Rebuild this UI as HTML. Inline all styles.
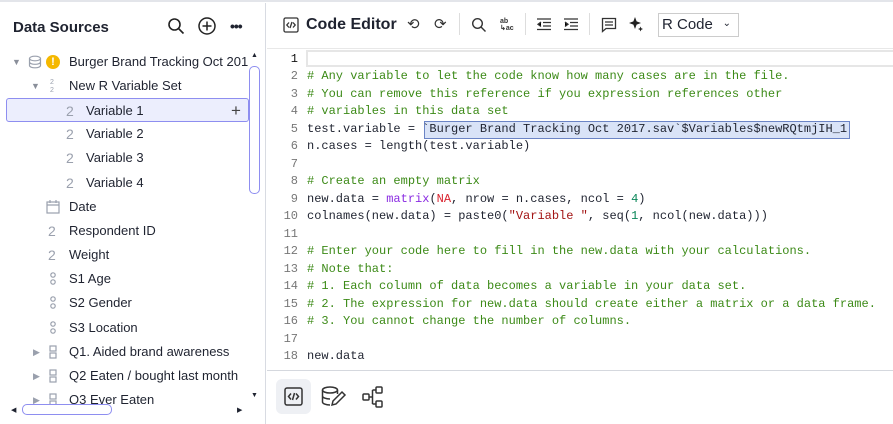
<!DOCTYPE html>
<html><head><style>
*{box-sizing:border-box;margin:0;padding:0}
body{width:893px;height:424px;overflow:hidden;background:#fff;font-family:"Liberation Sans",sans-serif;color:#1f2330;position:relative}
.top{position:absolute;left:0;top:0;width:893px;height:3px;border-top:2px solid #e3e5ea}
.left{position:absolute;left:0;top:3px;width:266px;height:421px;border-right:1px solid #d8dbe2}
.title{position:absolute;left:13px;font-weight:bold;font-size:15px}
.row{position:absolute;left:0;height:24px;width:250px;font-size:13px;line-height:24px;white-space:nowrap}
.row .t{position:absolute}
.num{position:absolute;color:#9aa0ad;font-size:14px}
.sel{background:#eceefd;border:1px solid #8e8ef0;border-radius:3px;left:6px;width:243px}
.code{position:absolute;left:270px;top:52px;font-family:"Liberation Mono",monospace;font-size:12px}
.ln{position:absolute;left:0;width:28px;text-align:right;color:#777}
.cl{position:absolute;left:37px;white-space:pre;color:#1f2330}
.c{color:#3c8a17}.k{color:#8a2be2}.r{color:#d9232e}.s{color:#a31515}.n{color:#098658}
</style></head><body>
<div class="top"></div>
<div class="left">
<div class="title" style="top:16px">Data Sources</div>
<svg style="position:absolute;left:167px;top:14px" width="18" height="18" fill="none" stroke="#222" stroke-width="1.6"><circle cx="7.5" cy="7.5" r="5.5"/><path d="M11.5 11.5l5 5"/></svg>
<svg style="position:absolute;left:197px;top:13px" width="20" height="20" fill="none" stroke="#222" stroke-width="1.5"><circle cx="10" cy="10" r="8"/><path d="M10 5.5v9M5.5 10h9"/></svg>
<div style="position:absolute;left:230px;top:15px;font-size:14px;font-weight:bold;letter-spacing:-1px">•••</div>
</div>
<div style="position:absolute;left:0;top:1px">
<div class="row" style="top:49px"><span class="t" style="left:12px;color:#8a8f9a;font-size:9px">▼</span>
<svg style="position:absolute;left:28px;top:5px" width="14" height="14" fill="none" stroke="#9aa0ad" stroke-width="1.2"><ellipse cx="7" cy="3.5" rx="5.5" ry="2.3"/><path d="M1.5 3.5v7c0 1.3 2.5 2.3 5.5 2.3s5.5-1 5.5-2.3v-7M1.5 7c0 1.3 2.5 2.3 5.5 2.3s5.5-1 5.5-2.3"/></svg>
<span style="position:absolute;left:46px;top:5px;width:14px;height:14px;border-radius:7px;background:#f5b800;color:#fff;font-size:11px;line-height:14px;text-align:center;font-weight:bold">!</span>
<span class="t" style="left:69px">Burger Brand Tracking Oct 201</span></div>
<div class="row" style="top:73px"><span class="t" style="left:31px;color:#8a8f9a;font-size:9px">▼</span><span class="t" style="left:50px;color:#9aa0ad;font-size:7px;line-height:8px;top:5px">2<br>2</span><span class="t" style="left:69px">New R Variable Set</span></div>
<div class="row sel" style="top:97px"><span class="num" style="left:59px">2</span><span class="t" style="left:79px">Variable 1</span><span class="t" style="left:224px;font-size:17px;color:#444">+</span></div>
<div class="row" style="top:121px"><span class="num" style="left:66px">2</span><span class="t" style="left:86px">Variable 2</span></div>
<div class="row" style="top:145px"><span class="num" style="left:66px">2</span><span class="t" style="left:86px">Variable 3</span></div>
<div class="row" style="top:170px"><span class="num" style="left:66px">2</span><span class="t" style="left:86px">Variable 4</span></div>
<div class="row" style="top:194px"><svg style="position:absolute;left:46px;top:5px" width="14" height="14" fill="none" stroke="#9aa0ad" stroke-width="1.2"><rect x="1" y="2" width="12" height="11"/><path d="M1 5h12M4 0v3M10 0v3"/></svg><span class="t" style="left:69px">Date</span></div>
<div class="row" style="top:218px"><span class="num" style="left:48px">2</span><span class="t" style="left:69px">Respondent ID</span></div>
<div class="row" style="top:242px"><span class="num" style="left:48px">2</span><span class="t" style="left:69px">Weight</span></div>
<div class="row" style="top:266px"><svg style="position:absolute;left:49px;top:5px" width="8" height="14" fill="none" stroke="#9aa0ad" stroke-width="1.2"><circle cx="4" cy="3" r="2.2"/><circle cx="4" cy="10" r="2.2"/></svg><span class="t" style="left:69px">S1 Age</span></div>
<div class="row" style="top:290px"><svg style="position:absolute;left:49px;top:5px" width="8" height="14" fill="none" stroke="#9aa0ad" stroke-width="1.2"><circle cx="4" cy="3" r="2.2"/><circle cx="4" cy="10" r="2.2"/></svg><span class="t" style="left:69px">S2 Gender</span></div>
<div class="row" style="top:315px"><svg style="position:absolute;left:49px;top:5px" width="8" height="14" fill="none" stroke="#9aa0ad" stroke-width="1.2"><circle cx="4" cy="3" r="2.2"/><circle cx="4" cy="10" r="2.2"/></svg><span class="t" style="left:69px">S3 Location</span></div>
<div class="row" style="top:339px"><span class="t" style="left:33px;color:#9aa0ad;font-size:9px">▶</span><svg style="position:absolute;left:49px;top:5px" width="8" height="14" fill="none" stroke="#9aa0ad" stroke-width="1.2"><rect x="1" y="1" width="6" height="5"/><rect x="1" y="8" width="6" height="5"/></svg><span class="t" style="left:69px">Q1. Aided brand awareness</span></div>
<div class="row" style="top:363px"><span class="t" style="left:33px;color:#9aa0ad;font-size:9px">▶</span><svg style="position:absolute;left:49px;top:5px" width="8" height="14" fill="none" stroke="#9aa0ad" stroke-width="1.2"><rect x="1" y="1" width="6" height="5"/><rect x="1" y="8" width="6" height="5"/></svg><span class="t" style="left:69px">Q2 Eaten / bought last month</span></div>
<div class="row" style="top:387px"><span class="t" style="left:33px;color:#9aa0ad;font-size:9px">▶</span><svg style="position:absolute;left:49px;top:5px" width="8" height="14" fill="none" stroke="#9aa0ad" stroke-width="1.2"><rect x="1" y="1" width="6" height="5"/><rect x="1" y="8" width="6" height="5"/></svg><span class="t" style="left:69px">Q3 Ever Eaten</span></div>
</div>
<div style="position:absolute;left:249px;top:66px;width:11px;height:128px;border:1px solid #8e8ef0;border-radius:5px;background:#fff"></div>
<div style="position:absolute;left:251px;top:52px;font-size:7px">▲</div>
<div style="position:absolute;left:251px;top:392px;font-size:7px">▼</div>
<div style="position:absolute;left:22px;top:404px;width:90px;height:11px;border:1px solid #8e8ef0;border-radius:5px;background:#fff"></div>
<div style="position:absolute;left:11px;top:406px;font-size:7px">◀</div>
<div style="position:absolute;left:237px;top:406px;font-size:7px">▶</div>

<svg style="position:absolute;left:283px;top:17px" width="16" height="16" fill="none" stroke="#333" stroke-width="1.3"><rect x="1" y="1" width="14" height="14" rx="1.5"/><path d="M6 5.5L3.8 8 6 10.5M10 5.5l2.2 2.5L10 10.5M9 5l-2 6"/></svg>
<div style="position:absolute;left:306px;top:16px;font-weight:bold;font-size:16px">Code Editor</div>
<div style="position:absolute;left:407px;top:15px;font-size:15px;color:#333">⟲</div>
<div style="position:absolute;left:434px;top:15px;font-size:15px;color:#333">⟳</div>
<div style="position:absolute;left:459px;top:13px;width:1px;height:22px;background:#ddd"></div>
<svg style="position:absolute;left:471px;top:17px" width="16" height="16" fill="none" stroke="#333" stroke-width="1.4"><circle cx="6.5" cy="6.5" r="4.8"/><path d="M10 10l4.5 4.5"/></svg>
<div style="position:absolute;left:500px;top:18px;font-size:7px;line-height:7px;font-weight:bold;color:#333">ab<br>↳ac</div>
<div style="position:absolute;left:525px;top:13px;width:1px;height:22px;background:#ddd"></div>
<svg style="position:absolute;left:537px;top:18px" width="14" height="13" stroke="#333" stroke-width="1.3"><path d="M0 1h14M6 4.5h8M6 8h8M0 11.5h14M4 4L1 6.3 4 8.5"/></svg>
<svg style="position:absolute;left:564px;top:18px" width="14" height="13" stroke="#333" stroke-width="1.3"><path d="M0 1h14M6 4.5h8M6 8h8M0 11.5h14M1 4l3 2.3L1 8.5"/></svg>
<div style="position:absolute;left:589px;top:13px;width:1px;height:22px;background:#ddd"></div>
<svg style="position:absolute;left:601px;top:17px" width="16" height="16" fill="none" stroke="#333" stroke-width="1.3"><path d="M1.5 1.5h13v10H5l-3.5 3z M4 5h8M4 8h8"/></svg>
<svg style="position:absolute;left:628px;top:16px" width="16" height="16" fill="#222"><path d="M7 1l1.6 4.4L13 7l-4.4 1.6L7 13 5.4 8.6 1 7l4.4-1.6z"/><path d="M12.5 10.5l.8 1.8 1.7.7-1.7.7-.8 1.8-.7-1.8-1.8-.7 1.8-.7z"/></svg>
<div style="position:absolute;left:658px;top:13px;width:81px;height:24px;border:1px solid #ccc;font-size:15px;line-height:21px;padding-left:3px">R Code<span style="position:absolute;right:7px;top:-1px;font-size:10px">⌄</span></div>

<div style="position:absolute;left:267px;top:48px;width:626px;height:1px;background:#e8e8e8"></div>
<div style="position:absolute;left:306px;top:50px;width:587px;height:17px;border:1px solid #e6e6e6;border-width:2px 0 2px 2px"></div>
<div style="position:absolute;left:424px;top:121px;width:426px;height:18px;background:#d9e3f7;border:1px solid #6b84c5"></div>

<div class="code">
<div class="ln" style="top:0px;color:#111">1</div>
<div class="ln" style="top:17px">2</div><div class="cl c" style="top:17px"># Any variable to let the code know how many cases are in the file.</div>
<div class="ln" style="top:35px">3</div><div class="cl c" style="top:35px"># You can remove this reference if you expression references other</div>
<div class="ln" style="top:52px">4</div><div class="cl c" style="top:52px"># variables in this data set</div>
<div class="ln" style="top:70px">5</div><div class="cl" style="top:70px">test.variable = `Burger Brand Tracking Oct 2017.sav`$Variables$newRQtmjIH_1</div>
<div class="ln" style="top:87px">6</div><div class="cl" style="top:87px">n.cases = length(test.variable)</div>
<div class="ln" style="top:105px">7</div>
<div class="ln" style="top:122px">8</div><div class="cl c" style="top:122px"># Create an empty matrix</div>
<div class="ln" style="top:140px">9</div><div class="cl" style="top:140px">new.data = <span class="k">matrix</span>(<span class="r">NA</span>, nrow = n.cases, ncol = <span class="n">4</span>)</div>
<div class="ln" style="top:157px">10</div><div class="cl" style="top:157px">colnames(new.data) = paste0(<span class="s">"Variable "</span>, seq(<span class="n">1</span>, ncol(new.data)))</div>
<div class="ln" style="top:175px">11</div>
<div class="ln" style="top:192px">12</div><div class="cl c" style="top:192px"># Enter your code here to fill in the new.data with your calculations.</div>
<div class="ln" style="top:210px">13</div><div class="cl c" style="top:210px"># Note that:</div>
<div class="ln" style="top:227px">14</div><div class="cl c" style="top:227px"># 1. Each column of data becomes a variable in your data set.</div>
<div class="ln" style="top:245px">15</div><div class="cl c" style="top:245px"># 2. The expression for new.data should create either a matrix or a data frame.</div>
<div class="ln" style="top:262px">16</div><div class="cl c" style="top:262px"># 3. You cannot change the number of columns.</div>
<div class="ln" style="top:280px">17</div>
<div class="ln" style="top:297px">18</div><div class="cl" style="top:297px">new.data</div>
</div>

<div style="position:absolute;left:267px;top:370px;width:626px;height:1px;background:#d5d8de"></div>
<div style="position:absolute;left:276px;top:379px;width:35px;height:35px;border-radius:6px;background:#eef0f4"></div>
<svg style="position:absolute;left:284px;top:387px" width="19" height="19" fill="none" stroke="#333" stroke-width="1.5"><rect x="1" y="1" width="17" height="17" rx="2"/><path d="M7 6.5L4.5 9.5 7 12.5M12 6.5l2.5 3-2.5 3M10.5 6l-2 7"/></svg>
<svg style="position:absolute;left:321px;top:386px" width="26" height="22" fill="none" stroke="#333" stroke-width="1.5"><ellipse cx="9" cy="4" rx="7.5" ry="3"/><path d="M1.5 4v12c0 1.6 3.3 3 7.5 3M1.5 10c0 1.6 3.3 3 7.5 3M16.5 4v4M11 19l1-4 9-9 3 3-9 9z"/></svg>
<svg style="position:absolute;left:362px;top:386px" width="22" height="22" fill="none" stroke="#333" stroke-width="1.5"><rect x="1" y="8" width="6" height="6" rx="1"/><rect x="14" y="1" width="6" height="6" rx="1"/><rect x="14" y="15" width="6" height="6" rx="1"/><path d="M7 11h3.5M10.5 4v14M10.5 4H14M10.5 18H14"/></svg>
</body></html>
